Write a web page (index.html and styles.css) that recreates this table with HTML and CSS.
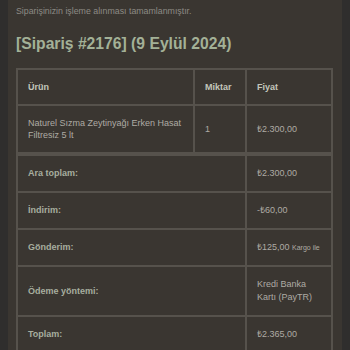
FILE: index.html
```html
<!DOCTYPE html>
<html>
<head>
  <meta charset="utf-8">
  <meta name="viewport" content="width=device-width, initial-scale=1.0"/>
  <title>Sipariş #2176</title>
  <link rel="stylesheet" href="styles.css">
</head>
<body>

  <div class="panel">
    <p class="note">Siparişinizin işleme alınması tamamlanmıştır.</p>

    <h2 class="order-title">[Sipariş #2176] (9 Eylül 2024)</h2>

    <table class="order">
      <thead>
        <tr>
          <th class="col-product">Ürün</th>
          <th class="col-qty">Miktar</th>
          <th class="col-price">Fiyat</th>
        </tr>
      </thead>
      <tbody>
        <tr>
          <td>Naturel Sızma Zeytinyağı Erken Hasat Filtresiz 5 lt</td>
          <td>1</td>
          <td>₺2.300,00</td>
        </tr>
      </tbody>
      <tfoot>
        <tr class="first">
          <th colspan="2">Ara toplam:</th>
          <td>₺2.300,00</td>
        </tr>
        <tr>
          <th colspan="2">İndirim:</th>
          <td>-₺60,00</td>
        </tr>
        <tr>
          <th colspan="2">Gönderim:</th>
          <td class="nowrap">₺125,00 <small>Kargo ile</small></td>
        </tr>
        <tr>
          <th colspan="2">Ödeme yöntemi:</th>
          <td>Kredi Banka Kartı (PayTR)</td>
        </tr>
        <tr>
          <th colspan="2">Toplam:</th>
          <td>₺2.365,00</td>
        </tr>
      </tfoot>
    </table>
  </div>

</body>
</html>
```

FILE: styles.css
```css
body {
  margin: 0;
  padding: 0;
  background: #2f2e2d;
  font-family: "Liberation Sans", Arial, sans-serif;
}
.panel {
  margin: 0 8px;
  padding: 6px 9px 20px 8px;
  background: #3a3631;
  min-height: 350px;
  box-sizing: border-box;
}
.note {
  margin: 0;
  font-size: 8.8px;
  line-height: 11px;
  color: #8d8b85;
}
.order-title {
  margin: 17px 0 14px;
  font-size: 15.7px;
  line-height: 20px;
  font-weight: bold;
  color: #a3b197;
}
.order {
  width: 100%;
  border: 1px solid #56524c;
  border-spacing: 0;
  color: #aeaba4;
  font-size: 9px;
  line-height: 12px;
}
.order th,
.order td {
  border: 1px solid #56524c;
  padding: 11px 10px;
  text-align: left;
  vertical-align: middle;
}
.order thead th {
  color: #c3c6bb;
  font-weight: bold;
}
.col-product {
  width: 155px;
}
.col-qty {
  width: 30px;
}
.order tfoot th,
.order tfoot td {
  line-height: 13px;
}
.order tfoot th {
  color: #a7ae9f;
  font-weight: bold;
}
.order tfoot .first th,
.order tfoot .first td {
  border-top-width: 3px;
}
.nowrap {
  white-space: nowrap;
}
.order small {
  font-size: 7px;
}
```
